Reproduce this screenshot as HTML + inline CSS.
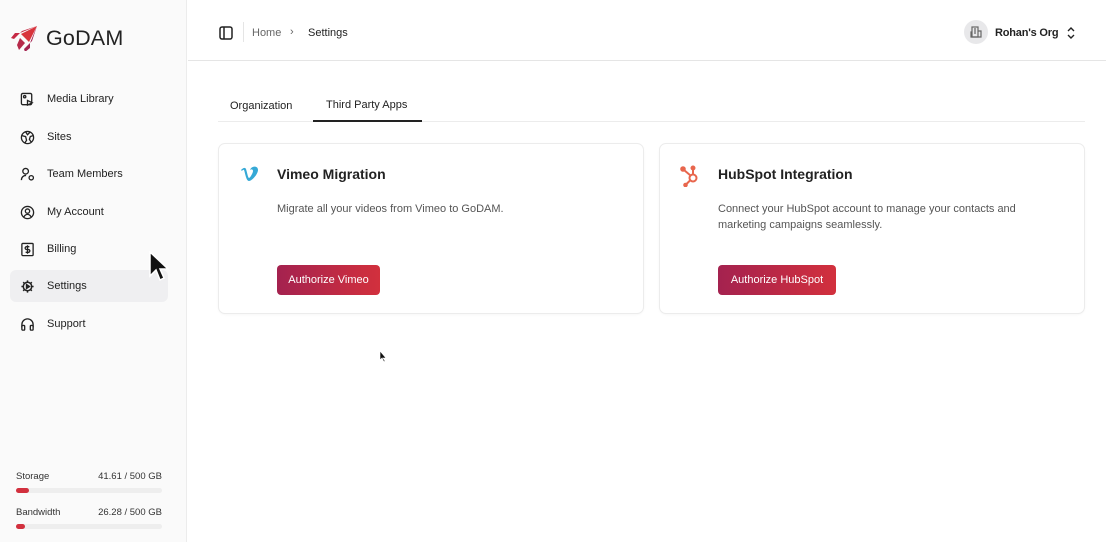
<!DOCTYPE html>
<html><head><meta charset="utf-8"><style>
*{box-sizing:border-box;margin:0;padding:0}
body{width:1106px;height:542px;overflow:hidden;background:#fff;font-family:"Liberation Sans",sans-serif;color:#1c1c1e;position:relative}
.sb{position:absolute;left:0;top:0;width:187px;height:542px;background:#fafafa;border-right:1px solid #ececec}
.logo{position:absolute;left:10px;top:25px;display:flex;align-items:center}
.logo span{font-size:21.5px;font-weight:500;margin-left:8px;color:#222;letter-spacing:.2px}
.item{position:absolute;left:10px;width:158px;height:32px;display:flex;align-items:center;font-size:11px;color:#222}
.item svg{position:absolute;left:10px;width:15px;height:15px}
.item span{position:absolute;left:37px;top:10px}
.item.act{background:#efeff1;border-radius:6px}
.st{position:absolute;left:16px;width:146px;font-size:9.5px;color:#333}
.st .r{position:absolute;right:0;top:0}
.bar{position:absolute;left:16px;width:146px;height:5px;border-radius:3px;background:#eeeeee}
.bar i{display:block;height:5px;border-radius:3px;background:#d2303e}
.hdr{position:absolute;left:188px;top:0;right:0;height:61px;border-bottom:1px solid #e5e5e5}
.tab{position:absolute;top:100px;font-size:11px;color:#222}
.card{position:absolute;top:143px;height:171px;border:1px solid #ececec;border-radius:7px;background:#fff;box-shadow:0 1px 2px rgba(0,0,0,.03)}
.card h3{position:absolute;left:58px;top:22px;font-size:14px;font-weight:600;color:#222}
.card p{position:absolute;left:58px;top:57px;font-size:11px;color:#555;line-height:16px}
.btn{position:absolute;left:58px;top:121px;height:30px;border-radius:4px;background:linear-gradient(90deg,#a4224f,#d2303d);color:#fff;font-size:11px;display:flex;align-items:center;justify-content:center}
</style></head><body>
<div class="sb">
 <div class="logo">
  <svg width="28" height="26" viewBox="0 0 28 26"><path d="M27 1 L12 6 L4 14 L1 13 L5 8 L10 8 Z" fill="#c62a45"/><path d="M27 1 L22 16 L14 24 L15 27 L20 23 L20 18 Z" fill="#a32350"/><path d="M27 1 L11 9 L19 17 Z" fill="#d8343c"/><path d="M10 13 L15 18 L9 25 L7 20 Z" fill="#b62a4a"/></svg>
  <span>GoDAM</span>
 </div>
 <div class="item" style="top:83px"><svg viewBox="0 0 16 16" fill="none" stroke="#222" stroke-width="1.4"><rect x="1.5" y="1.5" width="11" height="12" rx="1.5"/><circle cx="5" cy="5" r="1.2"/><path d="M8 9l5 2.5-5 2.5z"/></svg><span>Media Library</span></div>
 <div class="item" style="top:121px"><svg viewBox="0 0 16 16" fill="none" stroke="#222" stroke-width="1.4"><circle cx="8" cy="8" r="6.5"/><path d="M2 6l4 1 1 4-2 3M14 6l-3 1-1 3 2 3M6 2l2 3 3-3"/></svg><span>Sites</span></div>
 <div class="item" style="top:158px"><svg viewBox="0 0 16 16" fill="none" stroke="#222" stroke-width="1.4"><circle cx="6" cy="4.5" r="3"/><path d="M1.5 14c0-3 2-5 5-5"/><circle cx="12" cy="11.5" r="2.3"/></svg><span>Team Members</span></div>
 <div class="item" style="top:196px"><svg viewBox="0 0 16 16" fill="none" stroke="#222" stroke-width="1.4"><circle cx="8" cy="8" r="6.5"/><circle cx="8" cy="6.5" r="2.3"/><path d="M4 13c1-2 2.5-3 4-3s3 1 4 3"/></svg><span>My Account</span></div>
 <div class="item" style="top:233px"><svg viewBox="0 0 16 16" fill="none" stroke="#222" stroke-width="1.4"><rect x="2" y="1.5" width="12" height="13" rx="1"/><path d="M10 5H7a1.3 1.3 0 0 0 0 3h2a1.3 1.3 0 0 1 0 3H6M8 3.5v9"/></svg><span>Billing</span></div>
 <div class="item act" style="top:270px"><svg viewBox="0 0 16 16" fill="none" stroke="#222" stroke-width="1.6"><circle cx="8" cy="8" r="4.5"/><path d="M8 1.5v2M8 12.5v2M1.5 8h2M12.5 8h2M3.4 3.4l1.4 1.4M11.2 11.2l1.4 1.4M3.4 12.6l1.4-1.4M11.2 4.8l1.4-1.4"/><path d="M7 6l3 2-3 2z" fill="#222"/></svg><span>Settings</span></div>
 <div class="item" style="top:308px"><svg viewBox="0 0 16 16" fill="none" stroke="#222" stroke-width="1.4"><path d="M2 11V8a6 6 0 0 1 12 0v3"/><rect x="2" y="9" width="3" height="5" rx="1"/><rect x="11" y="9" width="3" height="5" rx="1"/></svg><span>Support</span></div>
 <div class="st" style="top:471px">Storage<span class="r">41.61 / 500 GB</span></div>
 <div class="bar" style="top:488px"><i style="width:13px"></i></div>
 <div class="st" style="top:507px">Bandwidth<span class="r">26.28 / 500 GB</span></div>
 <div class="bar" style="top:524px"><i style="width:9px"></i></div>
</div>
<div class="hdr">
 <svg style="position:absolute;left:31px;top:26px" width="14" height="14" viewBox="0 0 14 14" fill="none" stroke="#222" stroke-width="1.5"><rect x="1" y="1" width="12" height="12" rx="2"/><path d="M5 1v12"/></svg>
 <div style="position:absolute;left:55px;top:22px;width:1px;height:20px;background:#e5e5e5"></div>
 <div style="position:absolute;left:64px;top:27px;font-size:11px;color:#666">Home</div>
 <div style="position:absolute;left:102px;top:26px;font-size:11px;color:#666">›</div>
 <div style="position:absolute;left:120px;top:27px;font-size:11px;color:#222">Settings</div>
 <div style="position:absolute;left:776px;top:20px;width:24px;height:24px;border-radius:50%;background:#e8e8ea"></div>
 <svg style="position:absolute;left:782px;top:26px" width="12" height="12" viewBox="0 0 12 12" fill="none" stroke="#666" stroke-width="1.2"><rect x="2" y="1" width="6" height="10"/><path d="M8 5h3v6H1V6h1M4 3h2M4 5h2M4 7h2"/></svg>
 <div style="position:absolute;left:807px;top:27px;font-size:11px;font-weight:600;color:#222;letter-spacing:-.2px">Rohan's Org</div>
 <svg style="position:absolute;left:878px;top:26px" width="10" height="14" viewBox="0 0 10 14" fill="none" stroke="#222" stroke-width="1.4"><path d="M2 5l3-3 3 3M2 9l3 3 3-3"/></svg>
</div>
<div class="tab" style="left:230px">Organization</div>
<div class="tab" style="left:326px;top:99px">Third Party Apps</div>
<div style="position:absolute;left:218px;top:121px;width:867px;height:1px;background:#ececec"></div>
<div style="position:absolute;left:313px;top:120px;width:109px;height:2px;background:#222"></div>
<div class="card" style="left:218px;width:426px">
 <svg style="position:absolute;left:21px;top:22px" width="20" height="17" viewBox="0 0 20 17"><path d="M1 4c2-2 4-3 5-1 1 3 2 9 3 9 1 0 4-5 4-7 0-2-2-2-3-1 1-4 8-5 8 0 0 4-6 11-9 11-3 0-4-9-5-11C3 3 2 5 2 5z" fill="#36a9d6"/></svg>
 <h3>Vimeo Migration</h3>
 <p>Migrate all your videos from Vimeo to GoDAM.</p>
 <div class="btn" style="width:103px">Authorize Vimeo</div>
</div>
<div class="card" style="left:659px;width:426px">
 <svg style="position:absolute;left:20px;top:21px" width="22" height="22" viewBox="0 0 22 22" fill="none" stroke="#e8664d" stroke-width="2"><circle cx="13" cy="13" r="3.5"/><path d="M13 9.5V4M10.5 10.5L4 5M10 15.5l-4 4"/><circle cx="13" cy="3" r="1.5" fill="#e8664d"/><circle cx="3" cy="4" r="1.8" fill="#e8664d"/><circle cx="5.5" cy="20" r="1.3" fill="#e8664d"/></svg>
 <h3>HubSpot Integration</h3>
 <p>Connect your HubSpot account to manage your contacts and<br>marketing campaigns seamlessly.</p>
 <div class="btn" style="width:118px">Authorize HubSpot</div>
</div>
<svg style="position:absolute;left:149px;top:251px" width="20" height="32" viewBox="0 0 20 32"><path d="M1 1v24l6-6 4 10 4-2-4-9h8z" fill="#111" stroke="#fff" stroke-width="1.5"/></svg>
<svg style="position:absolute;left:379px;top:350px" width="8" height="13" viewBox="0 0 8 13"><path d="M1 1v9l2-2 2 4 1-1-2-3h3z" fill="#111" stroke="#fff" stroke-width=".6"/></svg>
</body></html>
